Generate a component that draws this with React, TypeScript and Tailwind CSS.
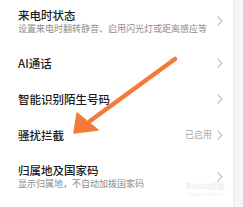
import React from "react";

const Chevron = () => (
  <svg width="6" height="10" viewBox="0 0 6 10" className="shrink-0">
    <polyline points="1,1 5,5 1,9" fill="none" stroke="#c4c4c4" strokeWidth="1.2" strokeLinecap="round" strokeLinejoin="round" />
  </svg>
);

type RowProps = { title: string; sub?: string; value?: string; h: string };

const Row = ({ title, sub, value, h }: RowProps) => (
  <div className={`flex items-center pl-[18px] pr-[10px] ${h}`}>
    <div className="flex-1 flex flex-col min-w-0">
      <div className="text-[11.5px] leading-[14px] text-[#1c1c1c] font-medium whitespace-nowrap">{title}</div>
      {sub && <div className="text-[9px] leading-[13px] text-[#8c8c8c] whitespace-nowrap">{sub}</div>}
    </div>
    {value && <div className="text-[9px] text-[#a8a8a8] mr-[5px]">{value}</div>}
    <Chevron />
  </div>
);

export default function App() {
  return (
    <div
      className="relative w-[243px] h-[207px] overflow-hidden bg-white flex"
      style={{ fontFamily: '"Noto Sans CJK SC", "Noto Sans", sans-serif' }}
    >
      <div className="flex-1 flex flex-col mt-[-2px]">
        <Row h="h-[46px]" title="来电时状态" sub="设置来电时翻转静音、启用闪光灯或距离感应等" />
        <Row h="h-[37px]" title="AI通话" />
        <Row h="h-[36px]" title="智能识别陌生号码" />
        <Row h="h-[36px]" title="骚扰拦截" value="已启用" />
        <Row h="h-[47px]" title="归属地及国家码" sub="显示归属地，不自动加拨国家码" />
      </div>
      <div className="w-[10px] bg-[#f5f5f5] border-l border-[#ebebeb]" />
      <div className="absolute left-[186px] top-[181px] text-[8px] leading-[9px] text-[#eeeeee] font-bold">Baidu经验</div>
      <div className="absolute left-[188px] top-[192px] text-[4px] leading-[5px] text-[#f0f0f0]">jingyan.baidu.com</div>
      <svg className="absolute left-0 top-0" width="243" height="207" viewBox="0 0 243 207">
        <line x1="175" y1="59" x2="90" y2="121" stroke="#f47a3a" strokeWidth="4.5" strokeLinecap="round" />
        <polygon points="74,133 77,113 98,130" fill="#f47a3a" stroke="#f47a3a" strokeWidth="1.5" strokeLinejoin="round" />
      </svg>
    </div>
  );
}
